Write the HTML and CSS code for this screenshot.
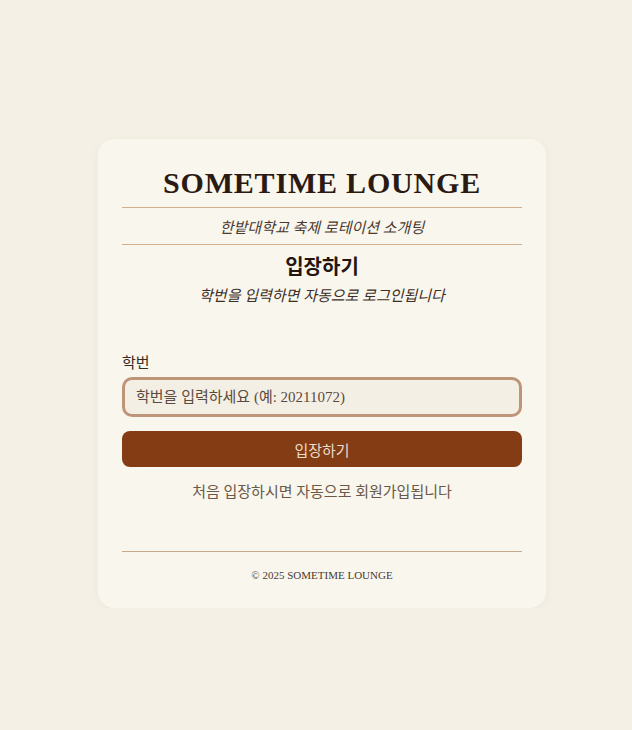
FILE: index.html
```html
<!DOCTYPE html>
<html lang="ko">
<head>
<meta charset="utf-8">
<title>Sometime Lounge</title>
<link rel="stylesheet" href="styles.css">
</head>
<body>
<main class="page">
  <section class="card">
    <h1 class="brand">SOMETIME LOUNGE</h1>
    <div class="tagline">한밭대학교 축제 로테이션 소개팅</div>
    <h2 class="heading">입장하기</h2>
    <p class="sub">학번을 입력하면 자동으로 로그인됩니다</p>
    <form class="form">
      <label class="label" for="sid">학번</label>
      <input class="input" id="sid" type="text" placeholder="학번을 입력하세요 (예: 20211072)">
      <button class="btn" type="button">입장하기</button>
    </form>
    <p class="note">처음 입장하시면 자동으로 회원가입됩니다</p>
    <footer class="footer">© 2025 SOMETIME LOUNGE</footer>
  </section>
</main>
</body>
</html>
```
FILE: styles.css
```css
* { box-sizing: border-box; }
html, body { margin: 0; padding: 0; }
body {
  background: #f4f0e5;
  font-family: "Liberation Serif", "Noto Sans CJK KR", serif;
  color: #2a1a10;
}
.page {
  display: flex;
  justify-content: center;
  padding-top: 139px;
  padding-left: 12px;
}
.card {
  width: 448px;
  background: #f9f6ee;
  border-radius: 16px;
  padding: 24px 24px 25px;
  box-shadow: 0 2px 8px rgba(120, 100, 60, 0.06);
}
.brand {
  margin: 0;
  text-align: center;
  font-family: "Liberation Serif", serif;
  font-weight: 700;
  font-size: 30px;
  line-height: 40px;
  letter-spacing: 0.8px;
  color: #2b1a12;
}
.tagline {
  margin-top: 4px;
  border-top: 1px solid #cfae89;
  border-bottom: 1px solid #cfae89;
  height: 38px;
  display: flex;
  align-items: center;
  justify-content: center;
  font-style: italic;
  font-size: 15px;
  color: #4a3a30;
}
.heading {
  margin: 8px 0 0;
  text-align: center;
  font-size: 20px;
  line-height: 28px;
  font-weight: 700;
  color: #24160e;
}
.sub {
  margin: 4px 0 0;
  text-align: center;
  font-style: italic;
  font-size: 15px;
  line-height: 22px;
  color: #3e2f26;
}
.form {
  margin-top: 45px;
  display: flex;
  flex-direction: column;
}
.label {
  font-size: 15px;
  line-height: 22px;
  color: #3a2a20;
}
.input {
  margin-top: 3px;
  height: 40px;
  border: 3px solid #bf9579;
  border-radius: 10px;
  background: #f4efe4;
  padding: 0 11px;
  font-family: "Liberation Serif", "Noto Sans CJK KR", serif;
  font-size: 15px;
  color: #3a2a20;
  outline: none;
}
.input::placeholder { color: #5b4a3e; opacity: 1; }
.btn {
  margin-top: 14px;
  height: 36px;
  border: none;
  border-radius: 8px;
  background: #833c14;
  color: #ecdccb;
  font-family: "Liberation Serif", "Noto Sans CJK KR", serif;
  font-size: 15px;
  cursor: pointer;
}
.note {
  margin: 14px 0 0;
  text-align: center;
  font-size: 15px;
  line-height: 22px;
  color: #6a5848;
}
.footer {
  margin-top: 48px;
  border-top: 1px solid #c4a98c;
  padding-top: 15px;
  text-align: center;
  font-size: 11px;
  line-height: 16px;
  color: #4a3a2e;
}
```
